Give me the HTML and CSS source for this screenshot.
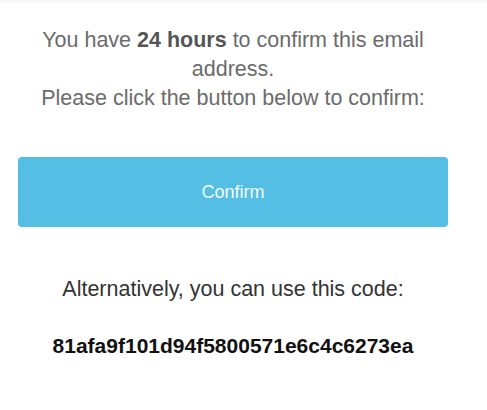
FILE: index.html
```html
<!DOCTYPE html>
<html>
<head>
<meta charset="utf-8">
<link rel="stylesheet" href="styles.css">
</head>
<body>
<div class="page">
  <div class="content">
    <p class="intro">You have <strong>24 hours</strong> to confirm this email address.<br>Please click the button below to confirm:</p>
    <a class="button" href="#">Confirm</a>
    <p class="alt">Alternatively, you can use this code:</p>
    <p class="code">81afa9f101d94f5800571e6c4c6273ea</p>
  </div>
</div>
</body>
</html>
```
FILE: styles.css
```css
html, body {
  margin: 0;
  padding: 0;
  background: #ffffff;
}
.page {
  width: 487px;
  height: 410px;
  overflow: hidden;
  border-top: 3px solid #f9f9f9;
  box-sizing: border-box;
  font-family: "Liberation Sans", Arial, sans-serif;
}
.content {
  width: 430px;
  margin-left: 18px;
  padding-top: 23px;
  text-align: center;
}
.intro {
  margin: 0;
  font-size: 21.5px;
  line-height: 29px;
  color: #6b6b6b;
}
.intro strong {
  color: #555555;
}
.button {
  display: block;
  margin-top: 44px;
  height: 70px;
  line-height: 70px;
  background: #54bee4;
  border-radius: 4px;
  color: #f4fbfe;
  font-size: 18px;
  text-decoration: none;
}
.alt {
  margin: 48px 0 0;
  font-size: 21.5px;
  line-height: 29px;
  color: #333333;
}
.code {
  margin: 27px 0 0;
  font-size: 21px;
  line-height: 29px;
  font-weight: bold;
  color: #111111;
}
```
